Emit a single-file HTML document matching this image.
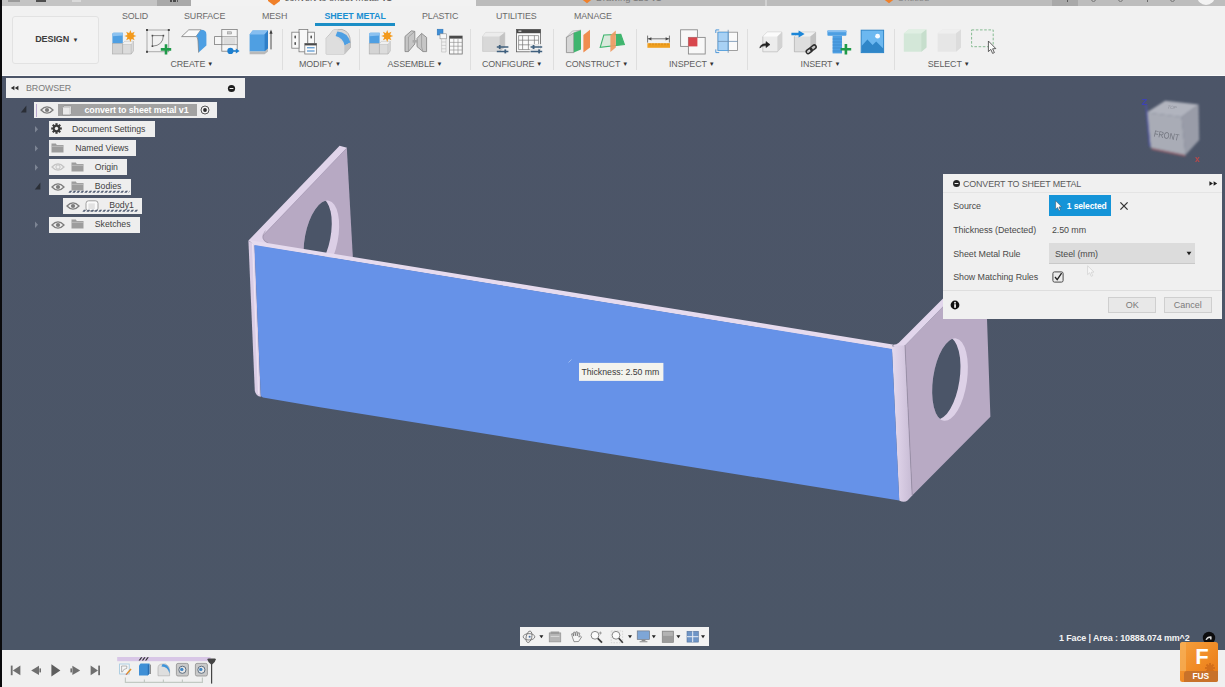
<!DOCTYPE html>
<html lang="en">
<head>
<meta charset="utf-8">
<title>Convert to Sheet Metal</title>
<style>
*{box-sizing:border-box;margin:0;padding:0}
html,body{width:1225px;height:687px;overflow:hidden;background:#4b5667;font-family:"Liberation Sans",Arial,sans-serif;}
#app{position:absolute;left:0;top:0;width:1225px;height:687px;overflow:hidden;background:#4b5667;}
.abs{position:absolute}
#leftedge{left:0;top:0;width:2px;height:687px;background:#0a0a0c;z-index:50}
/* top strip */
#topstrip{left:0;top:0;width:1225px;height:7px;background:#c4c4c4;overflow:hidden}
/* toolbar */
#toolbar{left:2px;top:6px;width:1223px;height:70px;background:#f1f1f1;border-bottom:1px solid #fafafa}
.tab{position:absolute;top:10.5px;font-size:8.9px;color:#6a6a6a;letter-spacing:-0.1px;line-height:11px;white-space:nowrap}
.tab.act{color:#1a8fd1;font-weight:bold;letter-spacing:-0.05px}
.grp{position:absolute;top:58.5px;font-size:8.9px;color:#5e5e5e;letter-spacing:-0.1px;line-height:11px;white-space:nowrap}
.grp i{font-style:normal;font-size:6px;position:relative;top:-1px;margin-left:2px;color:#333}
.sep{position:absolute;top:29px;width:1px;height:41px;background:#dedede}
#design{left:12px;top:16px;width:87px;height:48px;border:1px solid #e2e2e2;border-radius:3px;background:#f3f3f3}
#design span{position:absolute;left:22.2px;top:17.1px;font-size:9px;font-weight:bold;color:#3c3c3c;letter-spacing:-0.1px;line-height:11px}
#design i{position:absolute;left:59.4px;top:18.7px;font-style:normal;font-size:6px;color:#333;line-height:8px}
.ico{position:absolute;top:28px;width:28px;height:28px}
/* viewport */
#view{left:0;top:76px;width:1225px;height:574px;background:linear-gradient(180deg,#4c5568 0%,#4b5667 100%)}
/* browser */
#brhead{left:5.5px;top:78px;width:239px;height:20px;background:#f0f0f0}
#brhead span{position:absolute;left:20.5px;top:4.5px;font-size:8.9px;color:#7a7a7a;line-height:11px;letter-spacing:-0.1px}
.row{position:absolute;height:16px;margin-top:-0.2px;background:#eeeeee;font-size:8.7px;color:#3f3f3f;line-height:15.6px;white-space:nowrap}
.row span{position:absolute;top:0.7px}
.tri{position:absolute;width:4px;height:5px;background:#8b92a0}
/* dialog */
#dlg{left:943.2px;top:174px;width:279px;height:145.4px;background:#f0f0f0}
#dlg .t{position:absolute;font-size:8.9px;color:#4a4a4a;line-height:11px;white-space:nowrap;letter-spacing:-0.05px}
.btn{position:absolute;top:123px;height:15.6px;width:48px;border:1px solid #cfcfcf;background:#e8e8e8;font-size:9px;color:#7a7a7a;text-align:center;line-height:14px}
/* bottom */
#bottom{left:0;top:650px;width:1225px;height:37px;background:#f0f0f0}
#nav{left:520px;top:626.5px;width:189px;height:19.5px;background:#f2f2f2}
#status{left:1059px;top:633px;font-size:8.95px;font-weight:bold;color:#f4f4f4;line-height:11px;white-space:nowrap;letter-spacing:-0.1px}
</style>
</head>
<body>
<div id="app">
<div id="topstrip" class="abs">
<div class="abs" style="left:0;top:6px;width:1225px;height:1px;background:#b4b4b4"></div>
<div class="abs" style="left:8px;top:0;width:12px;height:1.5px;background:#9a9a9a"></div>
<div class="abs" style="left:36px;top:0;width:10px;height:2.2px;background:#4e4e4e"></div>
<div class="abs" style="left:72px;top:0;width:9px;height:1.5px;background:#dadada"></div>
<div class="abs" style="left:156.7px;top:0;width:34.3px;height:6.6px;background:#a9a9a9"></div>
<div class="abs" style="left:170px;top:0;width:2.2px;height:2.4px;background:#4a4a4a"></div>
<div class="abs" style="left:173.4px;top:0;width:2.2px;height:2.4px;background:#4a4a4a"></div><div class="abs" style="left:176.6px;top:0;width:1.4px;height:2.4px;background:#5a5a5a"></div>
<div class="abs tb" style="left:191px;top:0;width:285.3px;height:7px;background:#f2f2f2;overflow:hidden">
<svg class="abs" style="left:76px;top:-6.4px" width="14" height="12" viewBox="0 0 14 12"><path d="M1,1 L13,1 L13,7 L7,11.4 L1,7 Z" fill="#f0802a"/></svg>
<div class="abs" style="left:93.5px;top:-7px;font-size:9.4px;line-height:10px;color:#5a5a5a;white-space:nowrap;letter-spacing:0.1px">convert to sheet metal v1*</div>
</div>
<div class="abs" style="left:476.3px;top:0;width:288.7px;height:6.6px;background:#bcbcbc;overflow:hidden">
<svg class="abs" style="left:104.7px;top:-6.6px" width="12" height="11" viewBox="0 0 14 12"><path d="M1,1 L13,1 L13,7 L7,11.4 L1,7 Z" fill="#f0802a"/></svg>
<div class="abs" style="left:119.7px;top:-6.9px;font-size:9.4px;line-height:10px;color:#7a7a7a;white-space:nowrap">Drawing 123 v1</div>
</div>
<div class="abs" style="left:765px;top:0;width:1.5px;height:6.4px;background:#d2d2d2"></div>
<div class="abs" style="left:766.5px;top:0;width:285.5px;height:6.4px;background:#bcbcbc;overflow:hidden">
<svg class="abs" style="left:116.5px;top:-6.8px" width="12" height="11" viewBox="0 0 14 12"><path d="M1,1 L13,1 L13,7 L7,11.4 L1,7 Z" fill="#f0802a"/></svg>
<div class="abs" style="left:131px;top:-7.4px;font-size:9.4px;line-height:10px;color:#8a8a8a;white-space:nowrap">Untitled</div>
</div>
<div class="abs" style="left:1052px;top:0;width:26px;height:6.4px;background:#a9a9a9"></div>
<div class="abs" style="left:1066.6px;top:0;width:1.4px;height:2.4px;background:#5a5a5a"></div>
<div class="abs" style="left:1078px;top:0;width:147px;height:6.4px;background:#bdbdbd"></div>
<div class="abs" style="left:1091px;top:-3px;width:5px;height:5px;border-radius:3px;border:1px solid #7a7a7a"></div>
<div class="abs" style="left:1118px;top:-3px;width:5px;height:5px;border-radius:3px;border:1px solid #7a7a7a"></div>
<div class="abs" style="left:1146.6px;top:0;width:1.4px;height:2.4px;background:#6a6a6a"></div>
<div class="abs" style="left:1170px;top:-3px;width:5px;height:5px;border-radius:3px;border:1px solid #7a7a7a"></div>
<div class="abs" style="left:1197px;top:-13px;width:18px;height:18px;border-radius:9px;background:#f2f2f2"></div>
</div>
<div id="toolbar" class="abs"></div>
<div id="view" class="abs"></div>
<!--TB-S-->
<div class="tab" style="left:122px">SOLID</div>
<div class="tab" style="left:184px">SURFACE</div>
<div class="tab" style="left:262px">MESH</div>
<div class="tab act" style="left:324.4px">SHEET METAL</div>
<div class="abs" style="left:315.2px;top:22.8px;width:79.4px;height:2.8px;background:#1b8ec6"></div>
<div class="tab" style="left:422px">PLASTIC</div>
<div class="tab" style="left:496px">UTILITIES</div>
<div class="tab" style="left:574px">MANAGE</div>
<div id="design" class="abs"><span>DESIGN</span><i>&#9660;</i></div>
<div class="grp" style="left:170.5px">CREATE<i>&#9660;</i></div>
<div class="grp" style="left:299px">MODIFY<i>&#9660;</i></div>
<div class="grp" style="left:387.5px">ASSEMBLE<i>&#9660;</i></div>
<div class="grp" style="left:482px">CONFIGURE<i>&#9660;</i></div>
<div class="grp" style="left:565.4px">CONSTRUCT<i>&#9660;</i></div>
<div class="grp" style="left:669px">INSPECT<i>&#9660;</i></div>
<div class="grp" style="left:800.6px">INSERT<i>&#9660;</i></div>
<div class="grp" style="left:927.8px">SELECT<i>&#9660;</i></div>
<div class="sep" style="left:282px"></div>
<div class="sep" style="left:359.4px"></div>
<div class="sep" style="left:470.3px"></div>
<div class="sep" style="left:553.4px"></div>
<div class="sep" style="left:636.2px"></div>
<div class="sep" style="left:747.4px"></div>
<div class="sep" style="left:893.6px"></div>
<svg class="abs" style="left:0;top:0" width="1225" height="76" viewBox="0 0 1225 76">
<defs>
<g id="newcomp">
<path d="M0.6,1.6 Q0.6,0.2 2,0.2 L11,0.2 L11,11 L0.6,11 Z" fill="#4f9fe2"/>
<path d="M0.6,1.6 Q0.6,0.2 2,0.2 L11,0.2 L11,3 L0.6,3.6 Z" fill="#8cc2f0"/>
<rect x="0.6" y="11" width="10.2" height="10.4" fill="#d4d4d4" stroke="#a9a9a9" stroke-width="0.6"/>
<path d="M10.8,11.4 L12.8,8.8 L21.6,8.8 L21.6,18.4 L19.4,21.4 L10.8,21.4 Z" fill="#dcdcdc" stroke="#a9a9a9" stroke-width="0.6"/>
<path d="M10.8,11.4 L19.4,11.4 L21.6,8.8 M19.4,11.4 L19.4,21.4" fill="none" stroke="#b5b5b5" stroke-width="0.6"/>
<path d="M10.8,11.4 L12.8,8.8 L21.6,8.8 L19.4,11.4 Z" fill="#f0f0f0"/>
<g transform="translate(18.6 3.4)" fill="#f39a1c"><circle r="3.2"/><path d="M0,-6 L1.3,-2.6 L-1.3,-2.6 Z"/><path d="M0,-6 L1.3,-2.6 L-1.3,-2.6 Z" transform="rotate(45)"/><path d="M0,-6 L1.3,-2.6 L-1.3,-2.6 Z" transform="rotate(90)"/><path d="M0,-6 L1.3,-2.6 L-1.3,-2.6 Z" transform="rotate(135)"/><path d="M0,-6 L1.3,-2.6 L-1.3,-2.6 Z" transform="rotate(180)"/><path d="M0,-6 L1.3,-2.6 L-1.3,-2.6 Z" transform="rotate(225)"/><path d="M0,-6 L1.3,-2.6 L-1.3,-2.6 Z" transform="rotate(270)"/><path d="M0,-6 L1.3,-2.6 L-1.3,-2.6 Z" transform="rotate(315)"/></g>
</g>
<g id="slid"><path d="M0,0 L11.6,0 M0,4.4 L11.6,4.4" stroke="#40607e" stroke-width="1.5" fill="none"/><rect x="2" y="-2" width="1.8" height="4" fill="#40607e"/><rect x="7.6" y="2.4" width="1.8" height="4" fill="#40607e"/></g>
</defs>
<!-- 1 new component -->
<use href="#newcomp" x="111.8" y="32.6"/>
<!-- 2 sketch -->
<rect x="147" y="30" width="21.8" height="21.8" fill="none" stroke="#8a8a8a" stroke-width="0.7"/>
<g fill="#4a4a4a"><rect x="146" y="29" width="2" height="2"/><rect x="167.8" y="29" width="2" height="2"/><rect x="146" y="50.8" width="2" height="2"/></g>
<path d="M152.4,35.6 L163.4,35.6 Q163,45.6 152.4,46.2 Z" fill="none" stroke="#6f6f6f" stroke-width="0.8"/>
<g fill="#4a4a4a"><rect x="151.6" y="34.8" width="1.6" height="1.6"/><rect x="162.6" y="34.8" width="1.6" height="1.6"/><rect x="151.6" y="45.4" width="1.6" height="1.6"/></g>
<path d="M160.8,49.4 L171.2,49.4 M166,44.2 L166,54.6" stroke="#1f9a49" stroke-width="2.6" fill="none"/>
<!-- 3 flange -->
<path d="M181.6,36.6 L188.8,29.8 L201,29.8 L196,36.6 Z" fill="#fafafa" stroke="#7d7d7d" stroke-width="0.8"/>
<path d="M196,36.6 L201,29.8 Q206.4,29.8 206.4,34.4 L206.4,45.6 L198.6,52.6 L198,41 Q198,36.8 196,36.6 Z" fill="#4d9fe3"/>
<path d="M196,36.6 Q198,36.8 198,41 L198.6,52.6" fill="none" stroke="#7d7d7d" stroke-width="0.7"/>
<!-- 4 unfold-ish -->
<rect x="221.8" y="29.4" width="15.4" height="21.8" fill="#f6f6f6" stroke="#7d7d7d" stroke-width="0.8"/>
<rect x="214.6" y="36.6" width="7.2" height="8" fill="#f6f6f6" stroke="#7d7d7d" stroke-width="0.8"/>
<rect x="223.4" y="37.4" width="12.2" height="7.2" fill="#dcdcdc"/>
<path d="M221.8,36.6 L237.2,36.6 M221.8,44.6 L237.2,44.6" stroke="#8a8a8a" stroke-width="0.7"/>
<rect x="227.4" y="31.8" width="4.2" height="2.2" fill="#c9c9c9" stroke="#8a8a8a" stroke-width="0.5"/>
<circle cx="230.4" cy="50.9" r="3.1" fill="#1c7fd0"/><path d="M232,50.9 L236.4,50.9" stroke="#1c7fd0" stroke-width="1.4"/><path d="M235.8,48.4 L239.6,50.9 L235.8,53.4 Z" fill="#1c7fd0"/>
<!-- 5 extrude -->
<path d="M249.6,34.6 L252.6,30.6 L268,30.6 L268,48.6 L264.6,51.4 L249.6,51.4 Z" fill="#4f9fe2"/>
<path d="M249.6,34.6 L252.6,30.6 L268,30.6 L264.6,34.6 Z" fill="#86bef0"/>
<path d="M264.6,34.6 L268,30.6 L268,48.6 L264.6,51.4 Z" fill="#2f7fc8"/>
<path d="M249.6,51.4 L264.6,51.4 L268,48.6 L268,51.4 L264.6,54.2 L249.6,54.2 Z" fill="#b9b9b9"/>
<path d="M271,31.6 L271,49.4" stroke="#3d3d3d" stroke-width="0.9"/><path d="M269.4,33.8 L271,29.6 L272.6,33.8 Z" fill="#3d3d3d"/>
<!-- 6 modify: flat pattern -->
<rect x="299" y="29.4" width="8.8" height="22.4" fill="#f8f8f8" stroke="#7d7d7d" stroke-width="0.8"/>
<rect x="291.8" y="32.2" width="7.2" height="16" fill="#f8f8f8" stroke="#7d7d7d" stroke-width="0.8"/>
<rect x="307.8" y="32.2" width="6.6" height="16" fill="#f8f8f8" stroke="#7d7d7d" stroke-width="0.8"/>
<g fill="#555"><rect x="294.4" y="35.4" width="1.6" height="3" rx="0.7"/><rect x="294.4" y="42" width="1.6" height="3" rx="0.7"/><rect x="310.4" y="35.4" width="1.6" height="3" rx="0.7"/></g>
<rect x="304.8" y="43.4" width="11.8" height="10.6" fill="#fbfbfb" stroke="#7d7d7d" stroke-width="0.8"/>
<rect x="304.8" y="43.4" width="11.8" height="2" fill="#4a4a4a"/>
<path d="M307,47.8 L314.6,47.8 M307,51 L314.6,51" stroke="#2f7fc8" stroke-width="1"/>
<!-- 7 modify: fillet -->
<path d="M326.2,38.4 L333.4,30 L342,29.4 Q350.4,31.6 350.4,42 L350.4,47.6 L344.4,54 L326.2,54 Z" fill="#d9d9d9" stroke="#a1a1a1" stroke-width="0.7"/>
<path d="M326.2,38.4 L333.4,30 L338,29.6 Q331.4,36 344.4,44 L344.4,54 L326.2,54 Z" fill="#dedede"/>
<path d="M337.4,31.6 Q347.6,32.4 350.4,42.4 L344.6,45.4 Q343,37.6 335.6,36 Z" fill="#4d9fe3"/>
<path d="M344.4,45.4 L344.4,54 L350.4,47.6 L350.4,42.4 Z" fill="#c4c4c4"/>
<!-- 8 assemble: new component -->
<use href="#newcomp" x="368.6" y="32.6"/>
<!-- 9 joint -->
<path d="M405,36.4 L411.4,30.8 L414.8,31.4 L414.8,44 L408.4,51.6 L405,51.6 Z" fill="#c6c6c6" stroke="#7f7f7f" stroke-width="0.8"/>
<path d="M408.4,37 L408.4,51.6 M408.4,37 L414.8,31.4" fill="none" stroke="#8c8c8c" stroke-width="0.6"/>
<path d="M417,38.4 L421.6,33.4 L426.6,37.4 L426.6,51.6 L423,51.6 L417,46.6 Z" fill="#c6c6c6" stroke="#7f7f7f" stroke-width="0.8"/>
<path d="M421.6,33.4 L421.6,47 L423,51.6" fill="none" stroke="#8c8c8c" stroke-width="0.6"/>
<rect x="412.6" y="40" width="5" height="2.6" fill="#a9a9a9"/>
<!-- 10 bom/table -->
<rect x="437.2" y="29.2" width="5.8" height="5.8" fill="#3f8fd6" stroke="#2a6fb2" stroke-width="0.5"/>
<rect x="440" y="33.8" width="6.4" height="5" fill="#f8f8f8" stroke="#8a8a8a" stroke-width="0.6"/>
<path d="M441.6,38.8 L441.6,52 M446,38.8 L446,52 M441.6,42 L446,42 M441.6,45.4 L446,45.4 M441.6,48.8 L446,48.8 M441.6,52 L446,52" stroke="#b9b9b9" stroke-width="0.6" fill="none"/>
<rect x="449.6" y="36" width="12.6" height="18" fill="#fafafa" stroke="#6f6f6f" stroke-width="0.8"/>
<rect x="449.6" y="36" width="12.6" height="2.6" fill="#4a4a4a"/>
<path d="M453.8,38.6 L453.8,54 M458,38.6 L458,54 M449.6,42.4 L462.2,42.4 M449.6,46.2 L462.2,46.2 M449.6,50 L462.2,50" stroke="#8a8a8a" stroke-width="0.6" fill="none"/>
<!-- 11 configure cube -->
<path d="M482.6,36.4 L485.8,32.4 L504.8,32.4 L504.8,47 L499.6,51.4 L482.6,51.4 Z" fill="#d8d8d8" stroke="#bdbdbd" stroke-width="0.5"/>
<path d="M482.6,36.4 L485.8,32.4 L504.8,32.4 L499.6,36.4 Z" fill="#ececec"/>
<path d="M499.6,36.4 L504.8,32.4 L504.8,47 L499.6,51.4 Z" fill="#c3c3c3"/>
<use href="#slid" x="496.8" y="47"/>
<!-- 12 configure table -->
<rect x="516.6" y="29.4" width="24" height="22.4" fill="#fbfbfb" stroke="#5f5f5f" stroke-width="0.8"/>
<rect x="516.6" y="29.4" width="24" height="3.8" fill="#4a4a4a"/>
<rect x="518.4" y="30.6" width="3" height="1.2" fill="#e0e0e0"/>
<path d="M522.6,35.6 L522.6,49.6 M528.4,35.6 L528.4,49.6 M534.4,35.6 L534.4,49.6 M518.6,35.6 L538.6,35.6 M518.6,40.2 L538.6,40.2 M518.6,44.8 L538.6,44.8 M518.6,49.6 L538.6,49.6 M518.6,35.6 L518.6,49.6 M538.6,35.6 L538.6,49.6" stroke="#777" stroke-width="0.7" fill="none"/>
<rect x="529.8" y="44" width="12.4" height="9.6" fill="#f1f1f1" opacity="0.8"/>
<use href="#slid" x="530.6" y="47"/>
<!-- 13 construct: offset plane -->
<path d="M566.4,37.4 L573.8,32.8 L573.8,52.6 L566.4,52.6 Z" fill="#d6d6d6" stroke="#7f7f7f" stroke-width="0.7"/>
<path d="M566.4,37.4 L572.4,31 L581,30.2 L573.8,32.8 Z" fill="#ececec" stroke="#8f8f8f" stroke-width="0.5"/>
<path d="M573.8,32.8 L581,30.2 L581,49.6 L573.8,52.6 Z" fill="#3fb56e"/>
<path d="M583.4,35 L590,29.8 L590,47.4 L583.4,52.6 Z" fill="#ef8d4f"/>
<!-- 14 construct: plane at angle -->
<path d="M603.8,35 L620.8,34.4 L624.4,44.6 L600.2,47.4 Z" fill="#d9e9dc" stroke="#3fb56e" stroke-width="1.1"/>
<path d="M616,35 L620.8,34.4 L624.4,44.6 L616,45.6 Z" fill="#3fb56e"/>
<path d="M610.4,35.2 L615.8,30.4 L615.8,47.4 L610.4,52 Z" fill="#ef9a62" opacity="0.92"/>
<!-- 15 measure -->
<path d="M647.6,38.8 L669.4,38.8 M647.6,35.6 L647.6,42.6 M669.4,35.6 L669.4,42.6" stroke="#555" stroke-width="0.8" fill="none"/>
<path d="M648,38.8 L651.4,37.2 L651.4,40.4 Z M669,38.8 L665.6,37.2 L665.6,40.4 Z" fill="#444"/>
<rect x="647.4" y="43.2" width="22.6" height="4.6" fill="#f0a020"/>
<path d="M650,43.2 L650,45.2 M653,43.2 L653,45.2 M656,43.2 L656,45.2 M659,43.2 L659,45.2 M662,43.2 L662,45.2 M665,43.2 L665,45.2 M668,43.2 L668,45.2" stroke="#c9780a" stroke-width="0.6"/>
<!-- 16 interference -->
<rect x="680.6" y="29.8" width="16.8" height="16.6" fill="#f8f8f8" stroke="#8a8a8a" stroke-width="0.9"/>
<rect x="688.4" y="37.4" width="16.8" height="16.6" fill="#f8f8f8" stroke="#8a8a8a" stroke-width="0.9"/>
<rect x="688.4" y="37.4" width="9" height="9" fill="#d8474d"/>
<!-- 17 section analysis -->
<rect x="718" y="32.2" width="19.6" height="18.2" fill="#fafafa" stroke="#8a8a8a" stroke-width="0.8"/>
<rect x="718" y="32.2" width="10.2" height="18.2" fill="#a8d1f4" stroke="#4d9fe3" stroke-width="0.8"/>
<path d="M718,41.4 L737.6,41.4 M728.2,29.8 L728.2,52.8" stroke="#6f8fb0" stroke-width="0.8" fill="none"/>
<path d="M719.2,29.9 L715.8,29.9 L715.8,33 M719.2,52.6 L715.8,52.6 L715.8,49.4" stroke="#3f8fd6" stroke-width="0.9" fill="none"/>
<!-- 18 insert derive -->
<path d="M762.8,36.6 L767.4,32.2 L781.8,32.2 L781.8,47 L777.4,51.8 L762.8,51.8 Z" fill="#ececec" stroke="#b0b0b0" stroke-width="0.6"/>
<path d="M762.8,36.6 L767.4,32.2 L781.8,32.2 L777.4,36.6 Z" fill="#fbfbfb"/>
<path d="M777.4,36.6 L781.8,32.2 L781.8,47 L777.4,51.8 Z" fill="#d2d2d2"/>
<path d="M759.8,48 Q760.6,43.6 766,43.8 L766,41.6 L770,44.6 L766,47.6 L766,45.6 Q762,45.4 759.8,48 Z" fill="#222" stroke="#222" stroke-width="0.6"/>
<!-- 19 insert link -->
<path d="M794.4,36.6 L799,32.2 L815.6,32.2 L815.6,47 L810.4,51.8 L794.4,51.8 Z" fill="#dedede" stroke="#a3a3a3" stroke-width="0.6"/>
<path d="M794.4,36.6 L799,32.2 L815.6,32.2 L810.4,36.6 Z" fill="#f1f1f1"/>
<path d="M810.4,36.6 L815.6,32.2 L815.6,47 L810.4,51.8 Z" fill="#c2c2c2"/>
<path d="M791.4,32.8 L798.6,32.8 L798.6,30.4 L804.6,34 L798.6,37.6 L798.6,35.2 L791.4,35.2 Z" fill="#1c86d8"/>
<g fill="none" stroke="#2e2e2e" stroke-width="1.5"><rect x="806" y="49" width="6.4" height="3.8" rx="1.9" transform="rotate(-38 809.2 50.9)"/><rect x="810" y="45.8" width="6.4" height="3.8" rx="1.9" transform="rotate(-38 813.2 47.7)"/></g>
<!-- 20 insert fastener -->
<rect x="827.4" y="30.4" width="19" height="5.4" rx="0.8" fill="#4d9fe3"/>
<rect x="827.4" y="30.4" width="19" height="1.8" fill="#86bef0"/>
<rect x="832.6" y="35.8" width="9.4" height="17.6" fill="#4d9fe3"/>
<path d="M832.6,39 L842,39 M832.6,42 L842,42 M832.6,45 L842,45 M832.6,48 L842,48 M832.6,51 L842,51" stroke="#3a86c8" stroke-width="0.7"/>
<path d="M840.6,49.2 L851.2,49.2 M845.9,43.9 L845.9,54.5" stroke="#1f9a49" stroke-width="2.6" fill="none"/>
<!-- 21 insert image -->
<rect x="861.2" y="30.2" width="22.4" height="22.4" fill="#6cb8f0" stroke="#2f86c8" stroke-width="1"/>
<path d="M861.6,46 L867.4,39.4 L872.6,45 L876.2,41.4 L883.2,48.4 L883.2,52.2 L861.6,52.2 Z" fill="#2f86c8"/>
<circle cx="877.6" cy="36.2" r="2.4" fill="#f7fbff"/>
<!-- 22 select faded green cube -->
<path d="M903.8,33.6 L908.6,29.6 L926.4,29.6 L926.4,47.4 L921.4,51.8 L903.8,51.8 Z" fill="#d3e7d8"/>
<path d="M903.8,33.6 L908.6,29.6 L926.4,29.6 L921.4,33.6 Z" fill="#e0efe3"/>
<path d="M921.4,33.6 L926.4,29.6 L926.4,47.4 L921.4,51.8 Z" fill="#c6decc"/>
<!-- 23 select faded gray cube -->
<path d="M937.6,33.6 L942.4,29.6 L961,29.6 L961,47.4 L956,51.8 L937.6,51.8 Z" fill="#e6e6e6"/>
<path d="M937.6,33.6 L942.4,29.6 L961,29.6 L956,33.6 Z" fill="#efefef"/>
<path d="M956,33.6 L961,29.6 L961,47.4 L956,51.8 Z" fill="#dcdcdc"/>
<!-- 24 window select -->
<rect x="971.6" y="29.9" width="21.6" height="16.8" fill="none" stroke="#86bb92" stroke-width="1" stroke-dasharray="2.6 1.6"/>
<path d="M988.4,41 L988.4,51.6 L990.8,49.4 L992.6,53.4 L994.4,52.6 L992.6,48.8 L995.8,48.6 Z" fill="#fafafa" stroke="#3a3a3a" stroke-width="0.8"/>
</svg>
<!--TB-E-->
<!--SCENE-S-->
<svg class="abs" style="left:0;top:0" width="1225" height="687" viewBox="0 0 1225 687">
<defs>
<clipPath id="hL"><ellipse cx="321.4" cy="238.4" rx="16.5" ry="38.4" transform="rotate(11 321.4 238.4)"/></clipPath>
<clipPath id="hR"><ellipse cx="950" cy="379.6" rx="17" ry="41.6" transform="rotate(8.4 950 379.6)"/></clipPath>
<linearGradient id="bendR" gradientUnits="userSpaceOnUse" x1="893" y1="0" x2="911" y2="0"><stop offset="0" stop-color="#e2d8ec"/><stop offset="0.45" stop-color="#d8cce3"/><stop offset="1" stop-color="#c9bdd6"/></linearGradient>
<filter id="soft" x="-5%" y="-5%" width="110%" height="110%"><feGaussianBlur stdDeviation="0.55"/></filter>
</defs>
<g filter="url(#soft)">
<!-- left flange inner face -->
<polygon points="258,238.5 346.8,147.8 353,260 254,246" fill="#b7a9c3"/>
<!-- left flange top thickness strip -->
<polygon points="248.5,240.6 339.6,145.8 347,147.8 259.8,238.6 256,243" fill="#e0d4ea"/>
<polyline points="260,238.8 346.6,148.2" fill="none" stroke="#9f93ad" stroke-width="0.5"/>
<path d="M258.4,237.6 L265.4,230.4 Q258.6,239.4 268.4,243.4 L256,243 Z" fill="#e0d4ea"/>
<path d="M265.4,230.6 Q259,239.4 268.4,243.2" fill="none" stroke="#8f849c" stroke-width="0.5"/>
<!-- left hole -->
<g clip-path="url(#hL)">
<rect x="295" y="195" width="50" height="70" fill="#dccfe6"/>
<ellipse cx="314.2" cy="235.8" rx="16.3" ry="38" transform="rotate(11 314.2 235.8)" fill="#4c5568"/>
</g>
<!-- right flange face -->
<polygon points="905,345.4 986,262.5 987,319 990.4,416.8 912.2,495.4" fill="#b8aac4"/>
<!-- right flange top strip -->
<path d="M891.8,344.6 Q896.4,345 898.8,342.8 L950,291.6 L956,293.2 L905,345.4 L898,349 Z" fill="#e2d6ec"/>
<!-- right hole -->
<g clip-path="url(#hR)">
<rect x="925" y="330" width="50" height="100" fill="#ddd1e7"/>
<ellipse cx="942.6" cy="378.2" rx="17" ry="41.4" transform="rotate(8.4 942.6 378.2)" fill="#4c5568"/>
</g>
<!-- right bend -->
<path d="M891.8,346.4 L899,345.6 L905,345.4 L912.2,495.4 L907.5,500.5 Q904,503 899.2,500.4 Z" fill="url(#bendR)"/>
<polyline points="905,345.4 912.2,495.4" fill="none" stroke="#94889f" stroke-width="0.7"/>

<!-- left bend -->
<path d="M248.4,240.4 L254.6,244.8 L260.8,396.8 Q256,396 254.8,391 Z" fill="#dacde5"/>
<polyline points="252.6,243.6 258.6,394" fill="none" stroke="#ede3f3" stroke-width="1.2"/>
<!-- front panel top strip -->
<polygon points="248.5,240 892.6,344.4 892.4,349.4 254,245.2" fill="#e6dbee"/>
<!-- blue face -->
<path d="M254.4,245 L892,349 L899.3,500.4 L320,407.2 L263,397.4 Q260.8,397 260.7,394.6 Z" fill="#6692e8"/>
</g>
<!-- tooltip -->
<polyline points="568.5,362.5 571.5,359.5" fill="none" stroke="#a9c4f3" stroke-width="0.8"/>
<rect x="579" y="362.9" width="84.4" height="18" fill="#f3f3ee"/>
<text x="581.4" y="374.6" font-family="Liberation Sans, Arial, sans-serif" font-size="8.8" fill="#3a3a3a" textLength="78" lengthAdjust="spacingAndGlyphs">Thickness: 2.50 mm</text>
<!--CUBE-S-->
<defs><filter id="soft2" x="-10%" y="-10%" width="120%" height="120%"><feGaussianBlur stdDeviation="0.9"/></filter></defs>
<g filter="url(#soft2)">
<polygon points="1146.8,112.5 1165.2,100.7 1198.6,104.4 1181.5,117" fill="#b1b4be"/>
<polygon points="1181.5,117 1198.6,104.4 1199.2,140 1185.5,155" fill="#999ca8"/>
<polygon points="1146.8,112.5 1181.5,117 1185.5,155 1150.8,147.8" fill="#a9acb6"/>
<polyline points="1151.6,148.8 1185.4,155.8" fill="none" stroke="#a8626c" stroke-width="1.2"/>
<polyline points="1146,104 1149.8,146.6" fill="none" stroke="#4d53a6" stroke-width="1.5"/>
</g><g filter="url(#soft)"><text x="1141.4" y="105" font-family="Liberation Sans, Arial, sans-serif" font-size="9.5" font-weight="bold" fill="#3d42b4">Z</text>
<text x="1195" y="161.6" font-family="Liberation Sans, Arial, sans-serif" font-size="8.5" font-weight="bold" fill="#b8474a">x</text>
<text transform="translate(1153.6 136.4) rotate(10)" x="0" y="0" font-family="Liberation Sans, Arial, sans-serif" font-size="9" fill="#71747e" textLength="25.4" lengthAdjust="spacingAndGlyphs">FRONT</text>
<text transform="translate(1167.2 108.4) rotate(6)" x="0" y="0" font-family="Liberation Sans, Arial, sans-serif" font-size="4.6" font-style="italic" fill="#8b8e98">TOP</text>
</g>
<!--CUBE-E-->
</svg>
<!--SCENE-E-->
<!--BROWSER-S-->
<div id="brhead" class="abs">
<svg class="abs" style="left:3px;top:5px" width="12" height="10" viewBox="0 0 12 10"><path d="M5.4,2.8 L5.4,7.2 L1.8,5 Z M9.4,2.8 L9.4,7.2 L5.8,5 Z" fill="#2e2e2e"/></svg>
<span>BROWSER</span>
<svg class="abs" style="left:221.5px;top:5.5px" width="9" height="9" viewBox="0 0 9 9"><circle cx="4.5" cy="4.5" r="3.6" fill="#1e1e1e"/><rect x="2.6" y="4" width="3.8" height="1" fill="#f0f0f0"/></svg>
</div>
<!-- tree expand markers -->
<svg class="abs" style="left:0;top:100px" width="45" height="135" viewBox="0 100 45 135">
<path d="M26.4,105.4 L26.4,112.4 L20.8,112.4 Z" fill="#2a2e36"/>
<path d="M40.4,182.6 L40.4,189.6 L34.8,189.6 Z" fill="#2a2e36"/>
<g fill="#7d8594"><path d="M35,126 L38,129.2 L35,132.4 Z"/><path d="M35,145.2 L38,148.4 L35,151.6 Z"/><path d="M35,164.3 L38,167.5 L35,170.7 Z"/><path d="M35,221.6 L38,224.8 L35,228 Z"/></g>
</svg>
<!-- row 1 -->
<div class="row" style="left:34.3px;top:102.2px;width:182.5px;height:16px">
<div class="abs" style="left:1.5px;top:1.5px;width:1.2px;height:13px;background:#b9a7cf"></div>
<svg class="abs" style="left:6px;top:3px" width="14" height="10" viewBox="0 0 14 10"><path d="M1,5 Q7,-1.4 13,5 Q7,11.4 1,5 Z" fill="none" stroke="#7c7c7c" stroke-width="1.3"/><circle cx="7" cy="5" r="2.1" fill="#7c7c7c"/></svg>
<div class="abs" style="left:24px;top:2px;width:138.6px;height:12px;background:#a2a2a2"></div>
<svg class="abs" style="left:26.5px;top:2.5px" width="12" height="11" viewBox="0 0 12 11"><path d="M1.5,2.5 L3,1 L10.5,1 L10.5,8.5 L9,10 L1.5,10 Z" fill="#e9e9e9" stroke="#8a8a8a" stroke-width="0.7"/><path d="M9,2.5 L9,10 M9,2.5 L10.5,1 M1.5,2.5 L9,2.5" fill="none" stroke="#bdbdbd" stroke-width="0.6"/></svg>
<span style="left:50.2px;font-weight:bold;color:#fff;font-size:8.9px;letter-spacing:-0.1px">convert to sheet metal v1</span>
<svg class="abs" style="left:166px;top:3px" width="10" height="10" viewBox="0 0 10 10"><circle cx="5" cy="5" r="4" fill="#f4f4f4" stroke="#555" stroke-width="1"/><circle cx="5" cy="5" r="1.9" fill="#2a2a2a"/></svg>
</div>
<!-- row 2 -->
<div class="row" style="left:48.7px;top:121.3px;width:106.6px">
<svg class="abs" style="left:2.6px;top:2.3px" width="11" height="11" viewBox="0 0 11 11"><g transform="translate(5.5 5.5)"><g fill="#3a3a3a"><rect x="-1.1" y="-5.3" width="2.2" height="10.6"/><rect x="-1.1" y="-5.3" width="2.2" height="10.6" transform="rotate(45)"/><rect x="-1.1" y="-5.3" width="2.2" height="10.6" transform="rotate(90)"/><rect x="-1.1" y="-5.3" width="2.2" height="10.6" transform="rotate(135)"/><circle r="3.7"/></g><circle r="1.7" fill="#eeeeee"/></g></svg>
<span style="left:23.3px">Document Settings</span>
</div>
<!-- row 3 -->
<div class="row" style="left:48.7px;top:140.4px;width:87.7px">
<svg class="abs fold" style="left:2.8px;top:2.8px" width="13" height="10" viewBox="0 0 13 10"><path d="M0.5,0.6 L4.8,0.6 L5.8,2 L12.5,2 L12.5,9.6 L0.5,9.6 Z" fill="#9d9d9d"/><rect x="0.5" y="2.9" width="12" height="0.7" fill="#c9c9c9"/></svg>
<span style="left:26.5px">Named Views</span>
</div>
<!-- row 4 -->
<div class="row" style="left:48.7px;top:159.5px;width:78.8px">
<svg class="abs" style="left:2.6px;top:3px" width="14" height="10" viewBox="0 0 14 10"><path d="M1,5 Q7,-1.4 13,5 Q7,11.4 1,5 Z" fill="none" stroke="#c3c3c3" stroke-width="1.2"/><circle cx="7" cy="5" r="2.1" fill="none" stroke="#c3c3c3" stroke-width="1"/></svg>
<svg class="abs fold" style="left:22.6px;top:2.8px" width="13" height="10" viewBox="0 0 13 10"><path d="M0.5,0.6 L4.8,0.6 L5.8,2 L12.5,2 L12.5,9.6 L0.5,9.6 Z" fill="#9d9d9d"/><rect x="0.5" y="2.9" width="12" height="0.7" fill="#c9c9c9"/></svg>
<span style="left:46.1px">Origin</span>
</div>
<!-- row 5 -->
<div class="row" style="left:48.7px;top:178.7px;width:82.2px">
<svg class="abs" style="left:2.6px;top:3px" width="14" height="10" viewBox="0 0 14 10"><path d="M1,5 Q7,-1.4 13,5 Q7,11.4 1,5 Z" fill="none" stroke="#7c7c7c" stroke-width="1.3"/><circle cx="7" cy="5" r="2.1" fill="#7c7c7c"/></svg>
<svg class="abs fold" style="left:22.6px;top:2.8px" width="13" height="10" viewBox="0 0 13 10"><path d="M0.5,0.6 L4.8,0.6 L5.8,2 L12.5,2 L12.5,9.6 L0.5,9.6 Z" fill="#9d9d9d"/><rect x="0.5" y="2.9" width="12" height="0.7" fill="#c9c9c9"/></svg>
<span style="left:46.1px">Bodies</span>
<svg class="abs" style="left:19px;top:11.4px" width="62" height="3.4" viewBox="0 0 62 3.4"><path d="M1,1.7 L61.5,1.7" stroke="#525e74" stroke-width="1.9" stroke-dasharray="2.3 1.7" transform="skewX(-38) translate(1.4 0)" fill="none"/></svg>
</div>
<!-- row 6 -->
<div class="row" style="left:63.1px;top:197.9px;width:78.6px">
<svg class="abs" style="left:2.8px;top:3px" width="14" height="10" viewBox="0 0 14 10"><path d="M1,5 Q7,-1.4 13,5 Q7,11.4 1,5 Z" fill="none" stroke="#7c7c7c" stroke-width="1.3"/><circle cx="7" cy="5" r="2.1" fill="#7c7c7c"/></svg>
<svg class="abs" style="left:22px;top:1.8px" width="14" height="12" viewBox="0 0 14 12"><rect x="1" y="0.8" width="12" height="10" rx="2.6" fill="#fafafa" stroke="#8a8a8a" stroke-width="0.8"/><rect x="3.4" y="3.4" width="6.4" height="5.6" fill="#e2e2e2"/></svg>
<span style="left:46.1px">Body1</span>
<svg class="abs" style="left:19px;top:11.4px" width="57.4" height="3.4" viewBox="0 0 57.4 3.4"><path d="M1,1.7 L57,1.7" stroke="#525e74" stroke-width="1.9" stroke-dasharray="2.3 1.7" transform="skewX(-38) translate(1.4 0)" fill="none"/></svg>
</div>
<!-- row 7 -->
<div class="row" style="left:48.7px;top:216.8px;width:91.8px">
<svg class="abs" style="left:2.6px;top:3px" width="14" height="10" viewBox="0 0 14 10"><path d="M1,5 Q7,-1.4 13,5 Q7,11.4 1,5 Z" fill="none" stroke="#7c7c7c" stroke-width="1.3"/><circle cx="7" cy="5" r="2.1" fill="#7c7c7c"/></svg>
<svg class="abs fold" style="left:22.6px;top:2.8px" width="13" height="10" viewBox="0 0 13 10"><path d="M0.5,0.6 L4.8,0.6 L5.8,2 L12.5,2 L12.5,9.6 L0.5,9.6 Z" fill="#9d9d9d"/><rect x="0.5" y="2.9" width="12" height="0.7" fill="#c9c9c9"/></svg>
<span style="left:46.1px">Sketches</span>
</div>
<!--BROWSER-E-->
<!--DIALOG-S-->
<div id="dlg" class="abs">
<div class="abs" style="left:0;top:18px;width:279px;height:1px;background:#e4e4e4"></div>
<svg class="abs" style="left:8.6px;top:5.4px" width="9" height="9" viewBox="0 0 9 9"><circle cx="4.5" cy="4.5" r="3.5" fill="#262626"/><rect x="2.6" y="4" width="3.8" height="1" fill="#f0f0f0"/></svg>
<div class="t" style="left:19.8px;top:4.7px;color:#5a5a5a;letter-spacing:-0.12px">CONVERT TO SHEET METAL</div>
<svg class="abs" style="left:264.6px;top:5px" width="11" height="9" viewBox="0 0 11 9"><path d="M1.4,2.3 L1.4,6.7 L5,4.5 Z M5.6,2.3 L5.6,6.7 L9.2,4.5 Z" fill="#1e1e1e"/></svg>
<div class="t" style="left:10px;top:26.9px">Source</div>
<div class="abs" style="left:105.8px;top:21px;width:61.6px;height:21px;background:#1494d8"></div>
<svg class="abs" style="left:110.5px;top:26px" width="9" height="12" viewBox="0 0 9 12"><path d="M1.6,0.8 L1.6,9.2 L3.6,7.4 L5,10.8 L6.4,10.2 L5,6.9 L7.6,6.8 Z" fill="#fff" stroke="#3a4a5a" stroke-width="0.5"/></svg>
<div class="t" style="left:123.6px;top:26.9px;color:#fff;font-weight:bold;font-size:8.5px;letter-spacing:-0.12px">1 selected</div>
<svg class="abs" style="left:175.5px;top:27px" width="10" height="10" viewBox="0 0 10 10"><path d="M1.4,1.4 L8.6,8.6 M8.6,1.4 L1.4,8.6" stroke="#333" stroke-width="1.3" fill="none"/></svg>
<div class="t" style="left:10px;top:50.6px">Thickness (Detected)</div>
<div class="t" style="left:108.7px;top:50.6px">2.50 mm</div>
<div class="t" style="left:10px;top:74.5px">Sheet Metal Rule</div>
<div class="abs" style="left:105.8px;top:69.4px;width:146.2px;height:20.5px;background:#dcdcdc;border-bottom:1px solid #c9c9c9"></div>
<div class="t" style="left:111.8px;top:74.5px">Steel (mm)</div>
<svg class="abs" style="left:243px;top:77.4px" width="6" height="5" viewBox="0 0 6 5"><path d="M0.6,0.8 L5.4,0.8 L3,4.2 Z" fill="#222"/></svg>
<div class="t" style="left:10px;top:98.4px">Show Matching Rules</div>
<svg class="abs" style="left:109px;top:97.3px" width="12" height="12" viewBox="0 0 12 12"><rect x="0.9" y="0.9" width="10.2" height="10.2" rx="1.6" fill="#ececec" stroke="#4a4a4a" stroke-width="1"/><path d="M3,6 L5.2,8.6 L9.6,2.2" fill="none" stroke="#222" stroke-width="1.3"/></svg>
<svg class="abs" style="left:143px;top:90.5px" width="10" height="13" viewBox="0 0 10 13"><path d="M1.6,0.8 L1.6,9.6 L3.7,7.7 L5.2,11.3 L6.7,10.7 L5.2,7.2 L8,7.1 Z" fill="#f7f7f7" stroke="#cfcfcf" stroke-width="0.7"/></svg>
<div class="abs" style="left:0;top:116px;width:278.5px;height:1px;background:#dedede"></div>
<svg class="abs" style="left:6.8px;top:126px" width="10" height="10" viewBox="0 0 10 10"><circle cx="5" cy="5" r="4.4" fill="#111"/><rect x="4.2" y="4.2" width="1.7" height="3.6" fill="#fff"/><circle cx="5" cy="2.8" r="0.95" fill="#fff"/></svg>
<div class="btn" style="left:165px">OK</div>
<div class="btn" style="left:220.6px">Cancel</div>
</div>
<!--DIALOG-E-->
<!--BOTTOM-S-->
<div id="nav" class="abs">
<svg class="abs" style="left:0;top:0" width="189" height="19.5" viewBox="520 626.5 189 19.5">
<!-- orbit -->
<g fill="none" stroke="#6b6b6b" stroke-width="0.8"><ellipse cx="529" cy="636.3" rx="5.8" ry="3.2"/><ellipse cx="529" cy="636.3" rx="2.8" ry="5.8" transform="rotate(12 529 636.3)"/></g>
<circle cx="529.6" cy="636.3" r="1" fill="#4d6fa0"/>
<path d="M539.4,634.8 L543.4,634.8 L541.4,637.8 Z" fill="#222"/>
<!-- look at -->
<rect x="549.2" y="632.4" width="11.6" height="9" fill="#b5b5b5" stroke="#8c8c8c" stroke-width="0.6"/><rect x="550.6" y="631" width="8.6" height="2.4" fill="#9a9a9a"/><rect x="550.6" y="635.4" width="8.8" height="1" fill="#d9d9d9"/>
<!-- hand -->
<path d="M572.4,636.6 L571.6,633.4 L573,633.2 L573.6,635.6 L573.6,631.8 L575,631.6 L575.4,635.2 L576,631.2 L577.4,631.4 L577.2,635.4 L578.4,632.2 L579.8,632.6 L578.8,636.6 L580.6,635.6 L581.6,636.4 L578.6,641 L574,641.2 Z" fill="#f6f6f6" stroke="#6a6a6a" stroke-width="0.7"/>
<!-- zoom -->
<circle cx="595" cy="634.8" r="3.9" fill="#fbfbfb" stroke="#7a7a7a" stroke-width="0.9"/><path d="M597.8,637.8 L602,642.2" stroke="#3d3d3d" stroke-width="1.7"/><path d="M600.4,631 L600.4,634 M598.9,632.5 L601.9,632.5" stroke="#777" stroke-width="0.6"/>
<!-- zoom window -->
<rect x="611.2" y="630.4" width="11.4" height="11.8" fill="none" stroke="#c4c4c4" stroke-width="0.6" stroke-dasharray="1.6 1.2"/>
<circle cx="616" cy="634.8" r="3.9" fill="#fbfbfb" stroke="#7a7a7a" stroke-width="0.9"/><path d="M618.8,637.8 L622.8,642.2" stroke="#3d3d3d" stroke-width="1.7"/>
<path d="M628,634.8 L632,634.8 L630,637.8 Z" fill="#222"/>
<!-- display -->
<rect x="637.2" y="630.4" width="12.4" height="8.6" fill="#7ea6d6" stroke="#6a6f78" stroke-width="0.6"/><rect x="641.6" y="639" width="3.8" height="1.6" fill="#8b8b8b"/><rect x="639.6" y="640.6" width="7.8" height="1.2" fill="#9a9a9a"/>
<path d="M651.8,634.8 L655.8,634.8 L653.8,637.8 Z" fill="#222"/>
<!-- visual style -->
<rect x="662.2" y="630.6" width="11.4" height="11.4" fill="#9b9b9b" stroke="#7f7f7f" stroke-width="0.6"/><rect x="663" y="631.4" width="9.8" height="4" fill="#b3b3b3"/>
<path d="M676.4,634.8 L680.4,634.8 L678.4,637.8 Z" fill="#222"/>
<!-- grid -->
<rect x="687" y="630.8" width="11.4" height="10.8" fill="#6f95c6" stroke="#56749c" stroke-width="0.6"/><path d="M692.7,630.8 L692.7,641.6 M687,636.2 L698.4,636.2" stroke="#e9eef6" stroke-width="1"/>
<path d="M701,634.8 L705,634.8 L703,637.8 Z" fill="#222"/>
</svg>
</div>
<div id="status" class="abs">1 Face | Area : 10888.074 mm^2</div>
<svg class="abs" style="left:1202px;top:630.5px" width="14" height="14" viewBox="0 0 14 14"><circle cx="7" cy="7" r="6.2" fill="#0c0c0e"/><path d="M3.4,8.8 Q5,5 9.6,5.4 L9.6,8.6 L8,8.6 L8,6.9 Q5.8,7 4.8,9 Z" fill="#d9d9d9"/></svg>
<div id="bottom" class="abs">
<svg class="abs" style="left:0;top:0" width="240" height="37" viewBox="0 650 240 37">
<g fill="#6f6f6f">
<rect x="10.8" y="665.6" width="1.8" height="9.6"/><path d="M20.4,665.6 L20.4,675.2 L12.8,670.4 Z"/>
<path d="M39,665.8 L39,675 L31.2,670.4 Z"/><rect x="39.4" y="668.4" width="1.6" height="4"/>
<path d="M51.4,664.2 L51.4,676.6 L60.4,670.4 Z" fill="#5e5e5e"/>
<path d="M72.4,665.8 L72.4,675 L80.2,670.4 Z"/><rect x="70.4" y="668.4" width="1.6" height="4"/>
<rect x="98.2" y="665.6" width="1.8" height="9.6"/><path d="M90.6,665.6 L90.6,675.2 L98,670.4 Z"/>
</g>
<!-- timeline -->
<rect x="117.2" y="657" width="93.4" height="4.2" fill="#d8c6e6"/>
<path d="M138.6,660.6 L141,657.2 L142.4,657.2 L140,660.6 Z M141.8,660.6 L144.2,657.2 L145.6,657.2 L143.2,660.6 Z M145,660.6 L147.4,657.2 L148.8,657.2 L146.4,660.6 Z" fill="#2e2e2e"/>
<path d="M125.4,677.4 L125.4,682.4 L202.4,682.4 L202.4,677.4 M144.4,679.6 L144.4,682.4 M163.4,679.6 L163.4,682.4 M182.4,679.6 L182.4,682.4" fill="none" stroke="#c2c9c3" stroke-width="1.2"/>
<!-- sketch -->
<rect x="119.6" y="664" width="9.6" height="10" fill="#f6f6f6" stroke="#9ec6de" stroke-width="0.8"/><path d="M121.6,666 L126.8,666 L126.8,668.4 Q123,668.8 122.4,672 L121.6,672 Z" fill="none" stroke="#8a8a8a" stroke-width="0.6"/><path d="M126.2,673.4 L130.4,668.4 L131.6,669.4 L127.4,674.2 Z" fill="#e0902c"/><path d="M125.6,675 L126.2,673.4 L127.4,674.2 Z" fill="#c23a2a"/>
<!-- extrude -->
<path d="M139,665.6 L140.6,663.6 L149.4,663.6 L149.4,673.4 L147.8,675.6 L139,675.6 Z" fill="#3f8fd6"/><path d="M147.8,665.6 L149.4,663.6 L149.4,673.4 L147.8,675.6 Z" fill="#2a6fb2"/><path d="M150.4,664.6 L150.4,674" stroke="#555" stroke-width="0.7"/>
<!-- fillet -->
<path d="M158,668 Q158,664 162.6,664 L165.6,664 Q169.6,665.8 169.6,670 L169.6,675.8 L158,675.8 Z" fill="#dedede" stroke="#a9a9a9" stroke-width="0.6"/><path d="M162.6,664 Q168,664 169.6,670 L169.6,673.4 Q167.6,666.4 161.4,666.6 Z" fill="#3f94da"/>
<!-- hole 1 -->
<rect x="176.4" y="663.4" width="12" height="12.6" rx="1.6" fill="#c9c9c9" stroke="#8f8f8f" stroke-width="0.8"/><circle cx="182.4" cy="669.8" r="3.6" fill="#e9e9e9" stroke="#5f6f80" stroke-width="1"/><circle cx="181.8" cy="669.4" r="1.7" fill="#3f86c6"/>
<!-- hole 2 -->
<rect x="195.4" y="663.4" width="12" height="12.6" rx="1.6" fill="#c9c9c9" stroke="#8f8f8f" stroke-width="0.8"/><circle cx="201.4" cy="669.8" r="3.6" fill="#e9e9e9" stroke="#5f6f80" stroke-width="1"/><circle cx="200.8" cy="669.4" r="1.7" fill="#3f86c6"/>
<!-- marker -->
<path d="M207.4,659.6 Q207.4,658.4 208.6,658.4 L214.6,658.4 Q215.8,658.4 215.8,659.6 Q215.4,662 212.4,664.2 L210.8,664.2 Q207.8,662 207.4,659.6 Z" fill="#444"/><rect x="211" y="660" width="1.2" height="23.6" fill="#444"/>
</svg>
</div>
<!-- fusion logo -->
<div class="abs" style="left:1180px;top:642.3px;width:38px;height:39.4px;background:linear-gradient(135deg,#f5a03e 0%,#f08a24 55%,#e67817 100%);border-radius:2.5px;overflow:hidden">
<div class="abs" style="left:0;top:0;width:6px;height:28.4px;background:#f6b05a;opacity:.7"></div>
<div class="abs" style="left:15.2px;top:2.4px;font-size:22px;line-height:24px;font-weight:bold;color:#fff">F</div>
<svg class="abs" style="left:24px;top:20px" width="12" height="12" viewBox="0 0 12 12"><g transform="translate(6 6)" fill="#d46f1a"><rect x="-1" y="-5" width="2" height="10"/><rect x="-1" y="-5" width="2" height="10" transform="rotate(45)"/><rect x="-1" y="-5" width="2" height="10" transform="rotate(90)"/><rect x="-1" y="-5" width="2" height="10" transform="rotate(135)"/><circle r="3.2"/></g></svg>
<div class="abs" style="left:4px;top:28.4px;width:34px;height:11px;background:#c8722a;border-top-left-radius:3px"></div>
<div class="abs" style="left:12.6px;top:28.6px;font-size:8.4px;line-height:11px;font-weight:bold;color:#fff;letter-spacing:-0.1px">FUS</div>
</div>
<!--BOTTOM-E-->
<div id="leftedge" class="abs"></div>
</div>
</body>
</html>
